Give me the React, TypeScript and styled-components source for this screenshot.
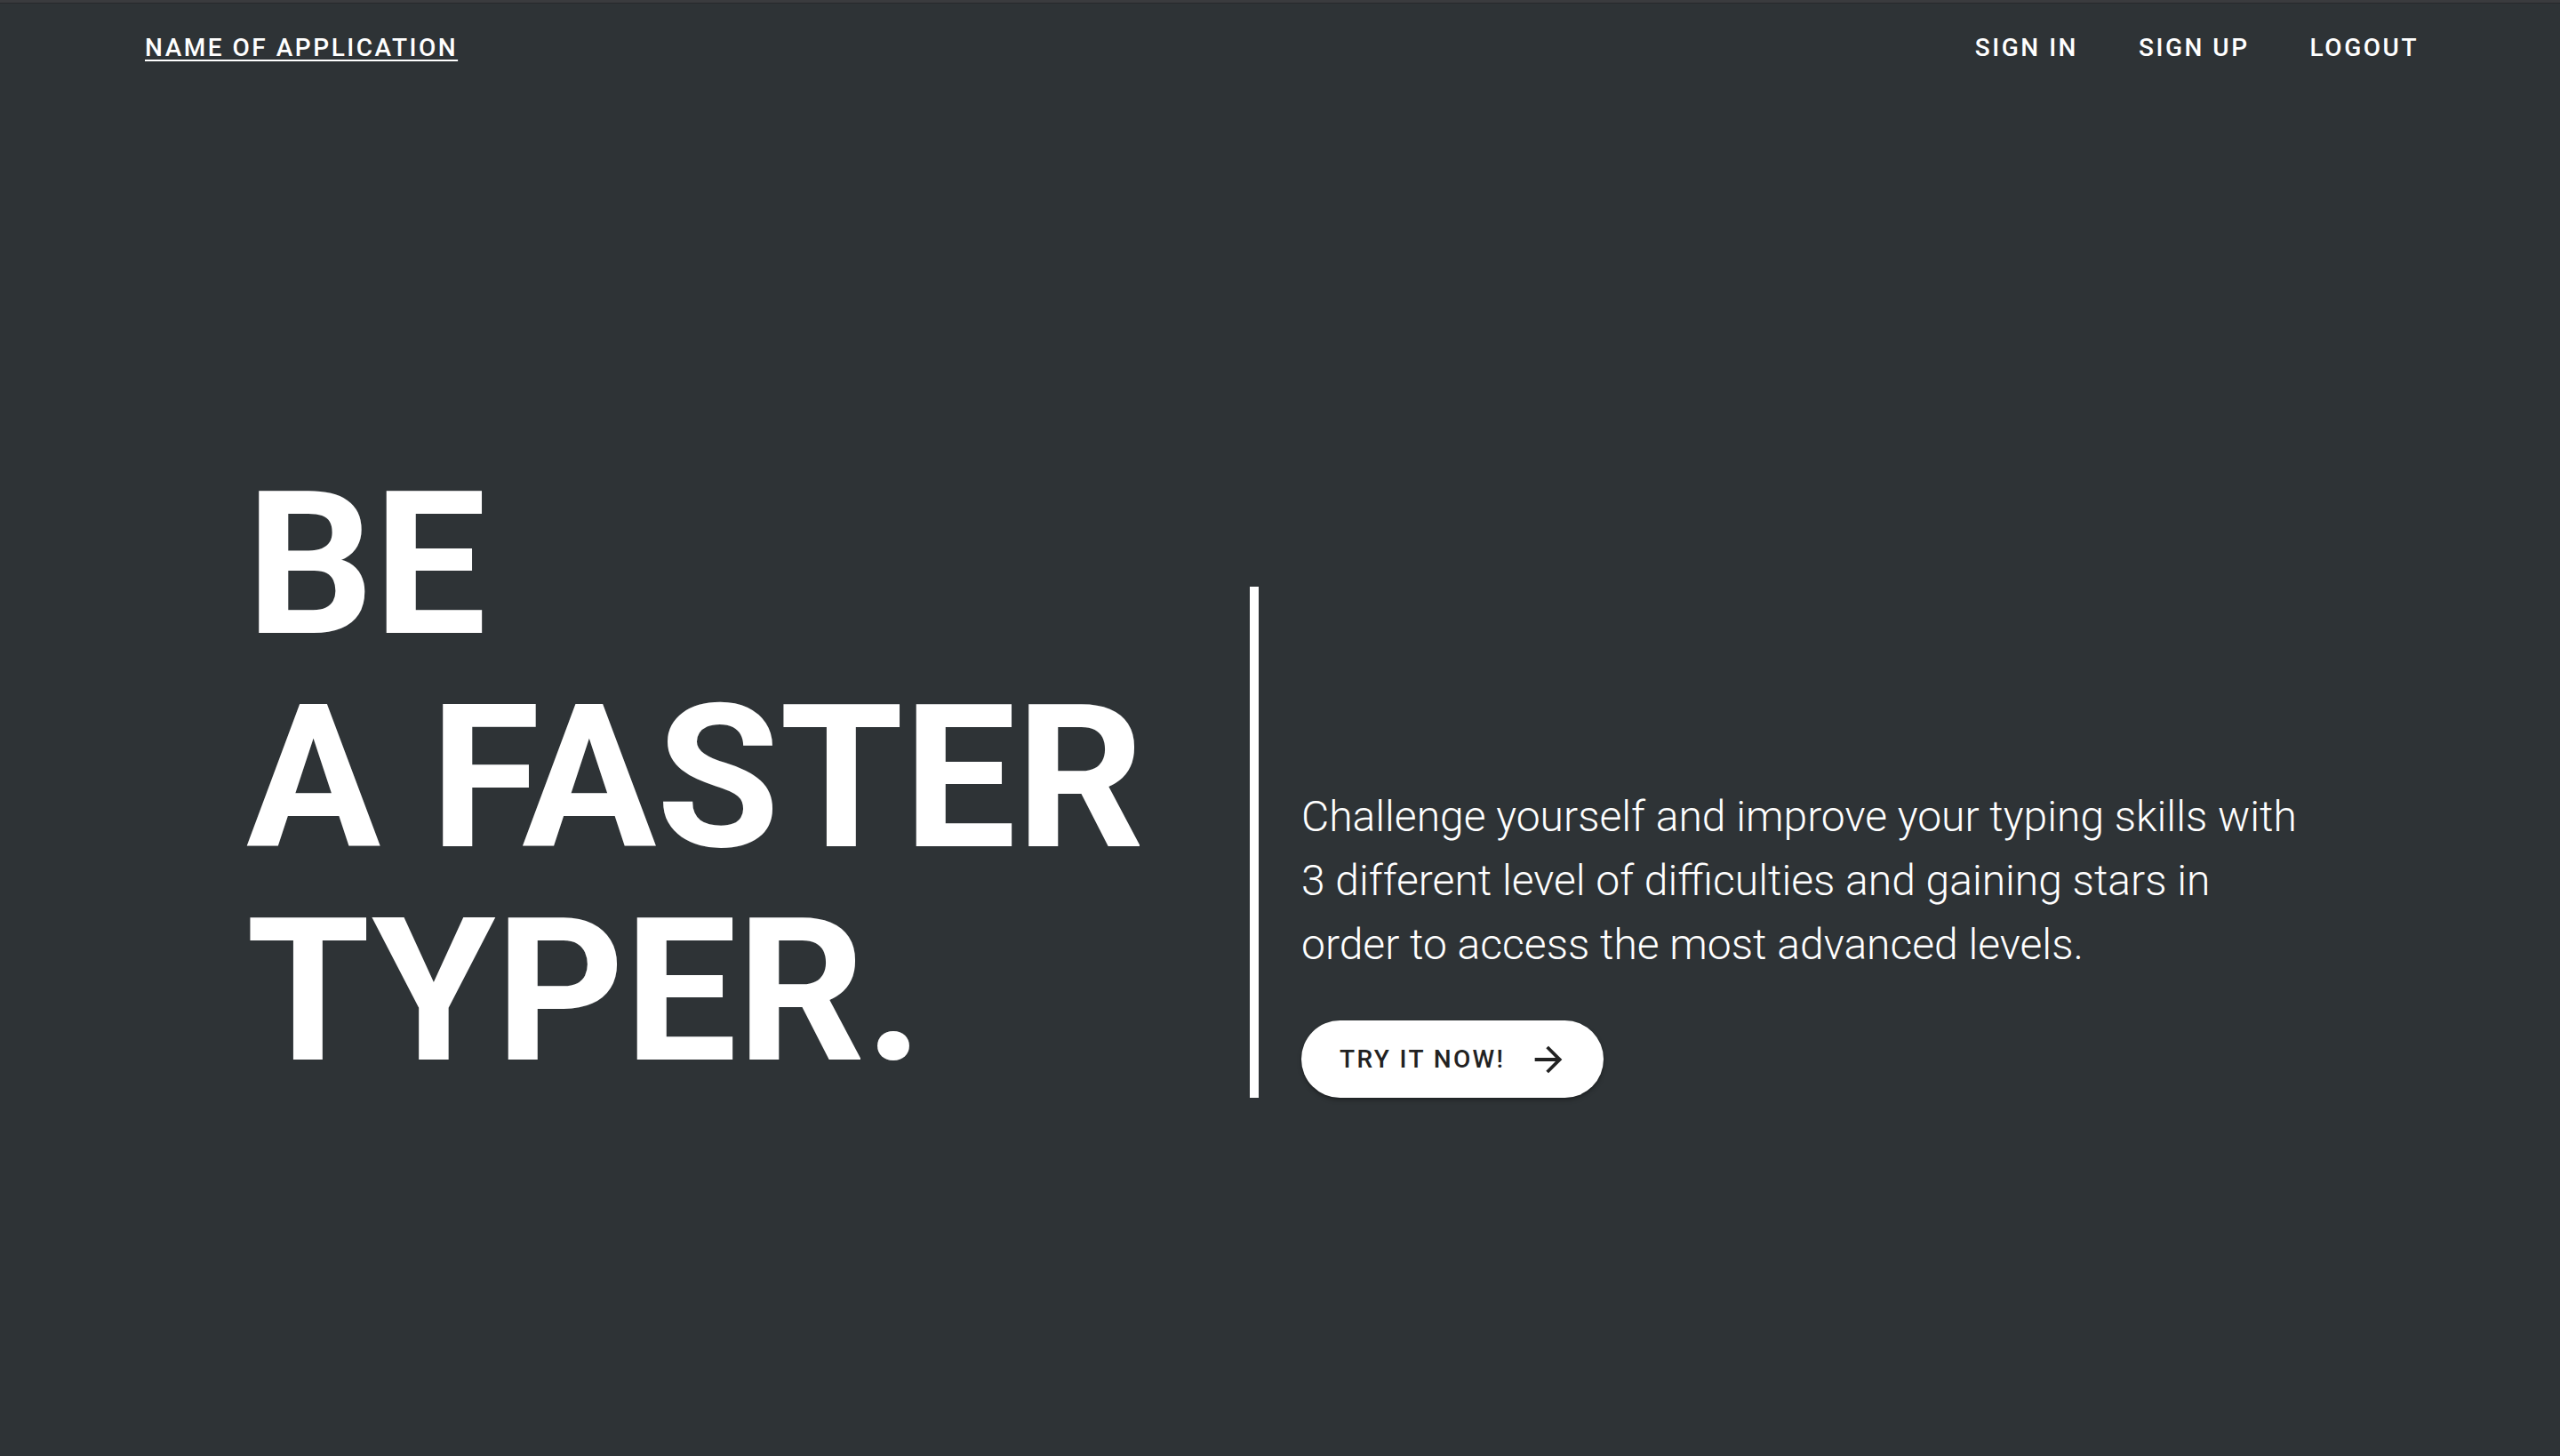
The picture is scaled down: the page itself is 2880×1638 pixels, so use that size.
import React from "react";
import styled, { createGlobalStyle } from "styled-components";

const GlobalStyle = createGlobalStyle`
  html, body {
    margin: 0;
    padding: 0;
    background: #2e3336;
  }
  body {
    font-family: Roboto, "Noto Sans", "Liberation Sans", sans-serif;
    color: #ffffff;
    -webkit-font-smoothing: antialiased;
  }
  * { box-sizing: border-box; }
`;

const Page = styled.div`
  min-height: 100vh;
  display: flex;
  flex-direction: column;
  background: #2e3336;
`;

const TopEdge = styled.div`
  height: 4px;
  background: #3a3b3e;
  border-bottom: 1px solid #26292b;
`;

const NavBar = styled.header`
  height: 108px;
  display: flex;
  align-items: flex-start;
  justify-content: space-between;
  padding: 25px 159px 0 163px;
`;

const NavText = styled.a<{ $underline?: boolean }>`
  display: block;
  font-size: 28px;
  line-height: 49px;
  font-weight: 500;
  letter-spacing: 0.09em;
  text-transform: uppercase;
  color: #ffffff;
  text-decoration: ${(p) => (p.$underline ? "underline" : "none")};
  text-underline-offset: 4px;
  text-decoration-thickness: 2px;
  cursor: pointer;
`;

const NavLinks = styled.nav`
  display: flex;
  gap: 68px;
`;

const Main = styled.main`
  flex: 1;
  display: flex;
  align-items: center;
  padding-left: 277px;
`;

const Hero = styled.section`
  display: flex;
  align-items: flex-end;
`;

const Headline = styled.h1`
  margin: 0;
  width: 1129px;
  font-size: 225px;
  line-height: 240px;
  font-weight: 700;
  color: #ffffff;
  letter-spacing: 0;
`;

const Side = styled.div`
  height: 575px;
  border-left: 10px solid #ffffff;
  padding-left: 48px;
  display: flex;
  flex-direction: column;
  justify-content: flex-end;
  align-items: flex-start;
`;

const Lead = styled.p`
  margin: 0 0 49px;
  max-width: 1140px;
  font-size: 48px;
  line-height: 72px;
  font-weight: 300;
  color: #ffffff;
`;

const CtaButton = styled.button`
  height: 87px;
  display: inline-flex;
  align-items: center;
  gap: 26px;
  padding: 0 39px 0 43px;
  border: none;
  border-radius: 44px;
  background: #ffffff;
  color: #222222;
  font-family: Roboto, "Noto Sans", "Liberation Sans", sans-serif;
  font-size: 28px;
  font-weight: 500;
  letter-spacing: 0.085em;
  text-transform: uppercase;
  box-shadow: 0 3px 5px rgba(0, 0, 0, 0.25), 0 1px 2px rgba(0, 0, 0, 0.2);
  cursor: pointer;
`;

const ArrowIcon = () => (
  <svg width="46" height="46" viewBox="0 0 24 24" fill="#222222" aria-hidden="true">
    <path d="M12 4l-1.41 1.41L16.17 11H4v2h12.17l-5.58 5.59L12 20l8-8z" />
  </svg>
);

export default function App() {
  return (
    <>
      <GlobalStyle />
      <Page>
        <TopEdge />
        <NavBar>
          <NavText $underline>Name of Application</NavText>
          <NavLinks>
            <NavText>Sign In</NavText>
            <NavText>Sign Up</NavText>
            <NavText>Logout</NavText>
          </NavLinks>
        </NavBar>
        <Main>
          <Hero>
            <Headline>
              BE
              <br />A FASTER
              <br />
              TYPER.
            </Headline>
            <Side>
              <Lead>
                Challenge yourself and improve your typing skills with 3 different level of
                difficulties and gaining stars in order to access the most advanced levels.
              </Lead>
              <CtaButton>
                Try it now!
                <ArrowIcon />
              </CtaButton>
            </Side>
          </Hero>
        </Main>
      </Page>
    </>
  );
}
